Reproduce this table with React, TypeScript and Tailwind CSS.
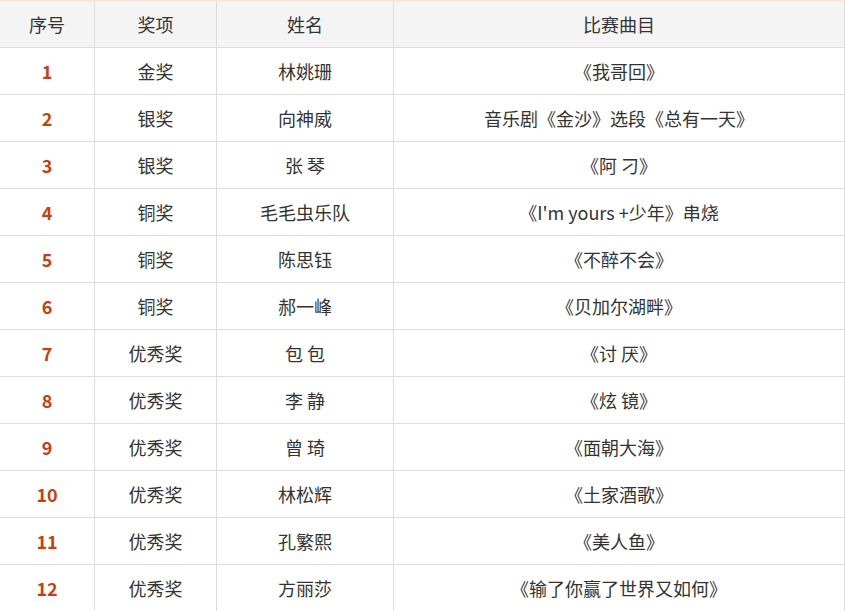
const rows = [
  ["1", "金奖", "林姚珊", "《我哥回》"],
  ["2", "银奖", "向神威", "音乐剧《金沙》选段《总有一天》"],
  ["3", "银奖", "张 琴", "《阿 刁》"],
  ["4", "铜奖", "毛毛虫乐队", "《I'm yours +少年》串烧"],
  ["5", "铜奖", "陈思钰", "《不醉不会》"],
  ["6", "铜奖", "郝一峰", "《贝加尔湖畔》"],
  ["7", "优秀奖", "包 包", "《讨 厌》"],
  ["8", "优秀奖", "李 静", "《炫 镜》"],
  ["9", "优秀奖", "曾 琦", "《面朝大海》"],
  ["10", "优秀奖", "林松辉", "《土家酒歌》"],
  ["11", "优秀奖", "孔繁熙", "《美人鱼》"],
  ["12", "优秀奖", "方丽莎", "《输了你赢了世界又如何》"],
];

const cell = "h-[47px] flex items-center justify-center border-r border-b border-[#dddddd]";

const App = () => {
  return (
    <div
      className="w-[845px] bg-white text-[18px] text-[#333333]"
      style={{ fontFamily: '"Microsoft YaHei", "Noto Sans CJK SC", "Noto Sans", sans-serif' }}
    >
      <div className="flex bg-[#f4f4f4] border-t border-[#fbe2d5]">
        <div className={`${cell} w-[95px]`}>序号</div>
        <div className={`${cell} w-[122px]`}>奖项</div>
        <div className={`${cell} w-[177px]`}>姓名</div>
        <div className={`${cell} w-[451px]`}>比赛曲目</div>
      </div>
      {rows.map((r) => (
        <div key={r[0]} className="flex">
          <div className={`${cell} w-[95px] font-bold text-[#c8400e]`}>{r[0]}</div>
          <div className={`${cell} w-[122px]`}>{r[1]}</div>
          <div className={`${cell} w-[177px]`}>{r[2]}</div>
          <div className={`${cell} w-[451px]`}>{r[3]}</div>
        </div>
      ))}
    </div>
  );
};

export default App;
